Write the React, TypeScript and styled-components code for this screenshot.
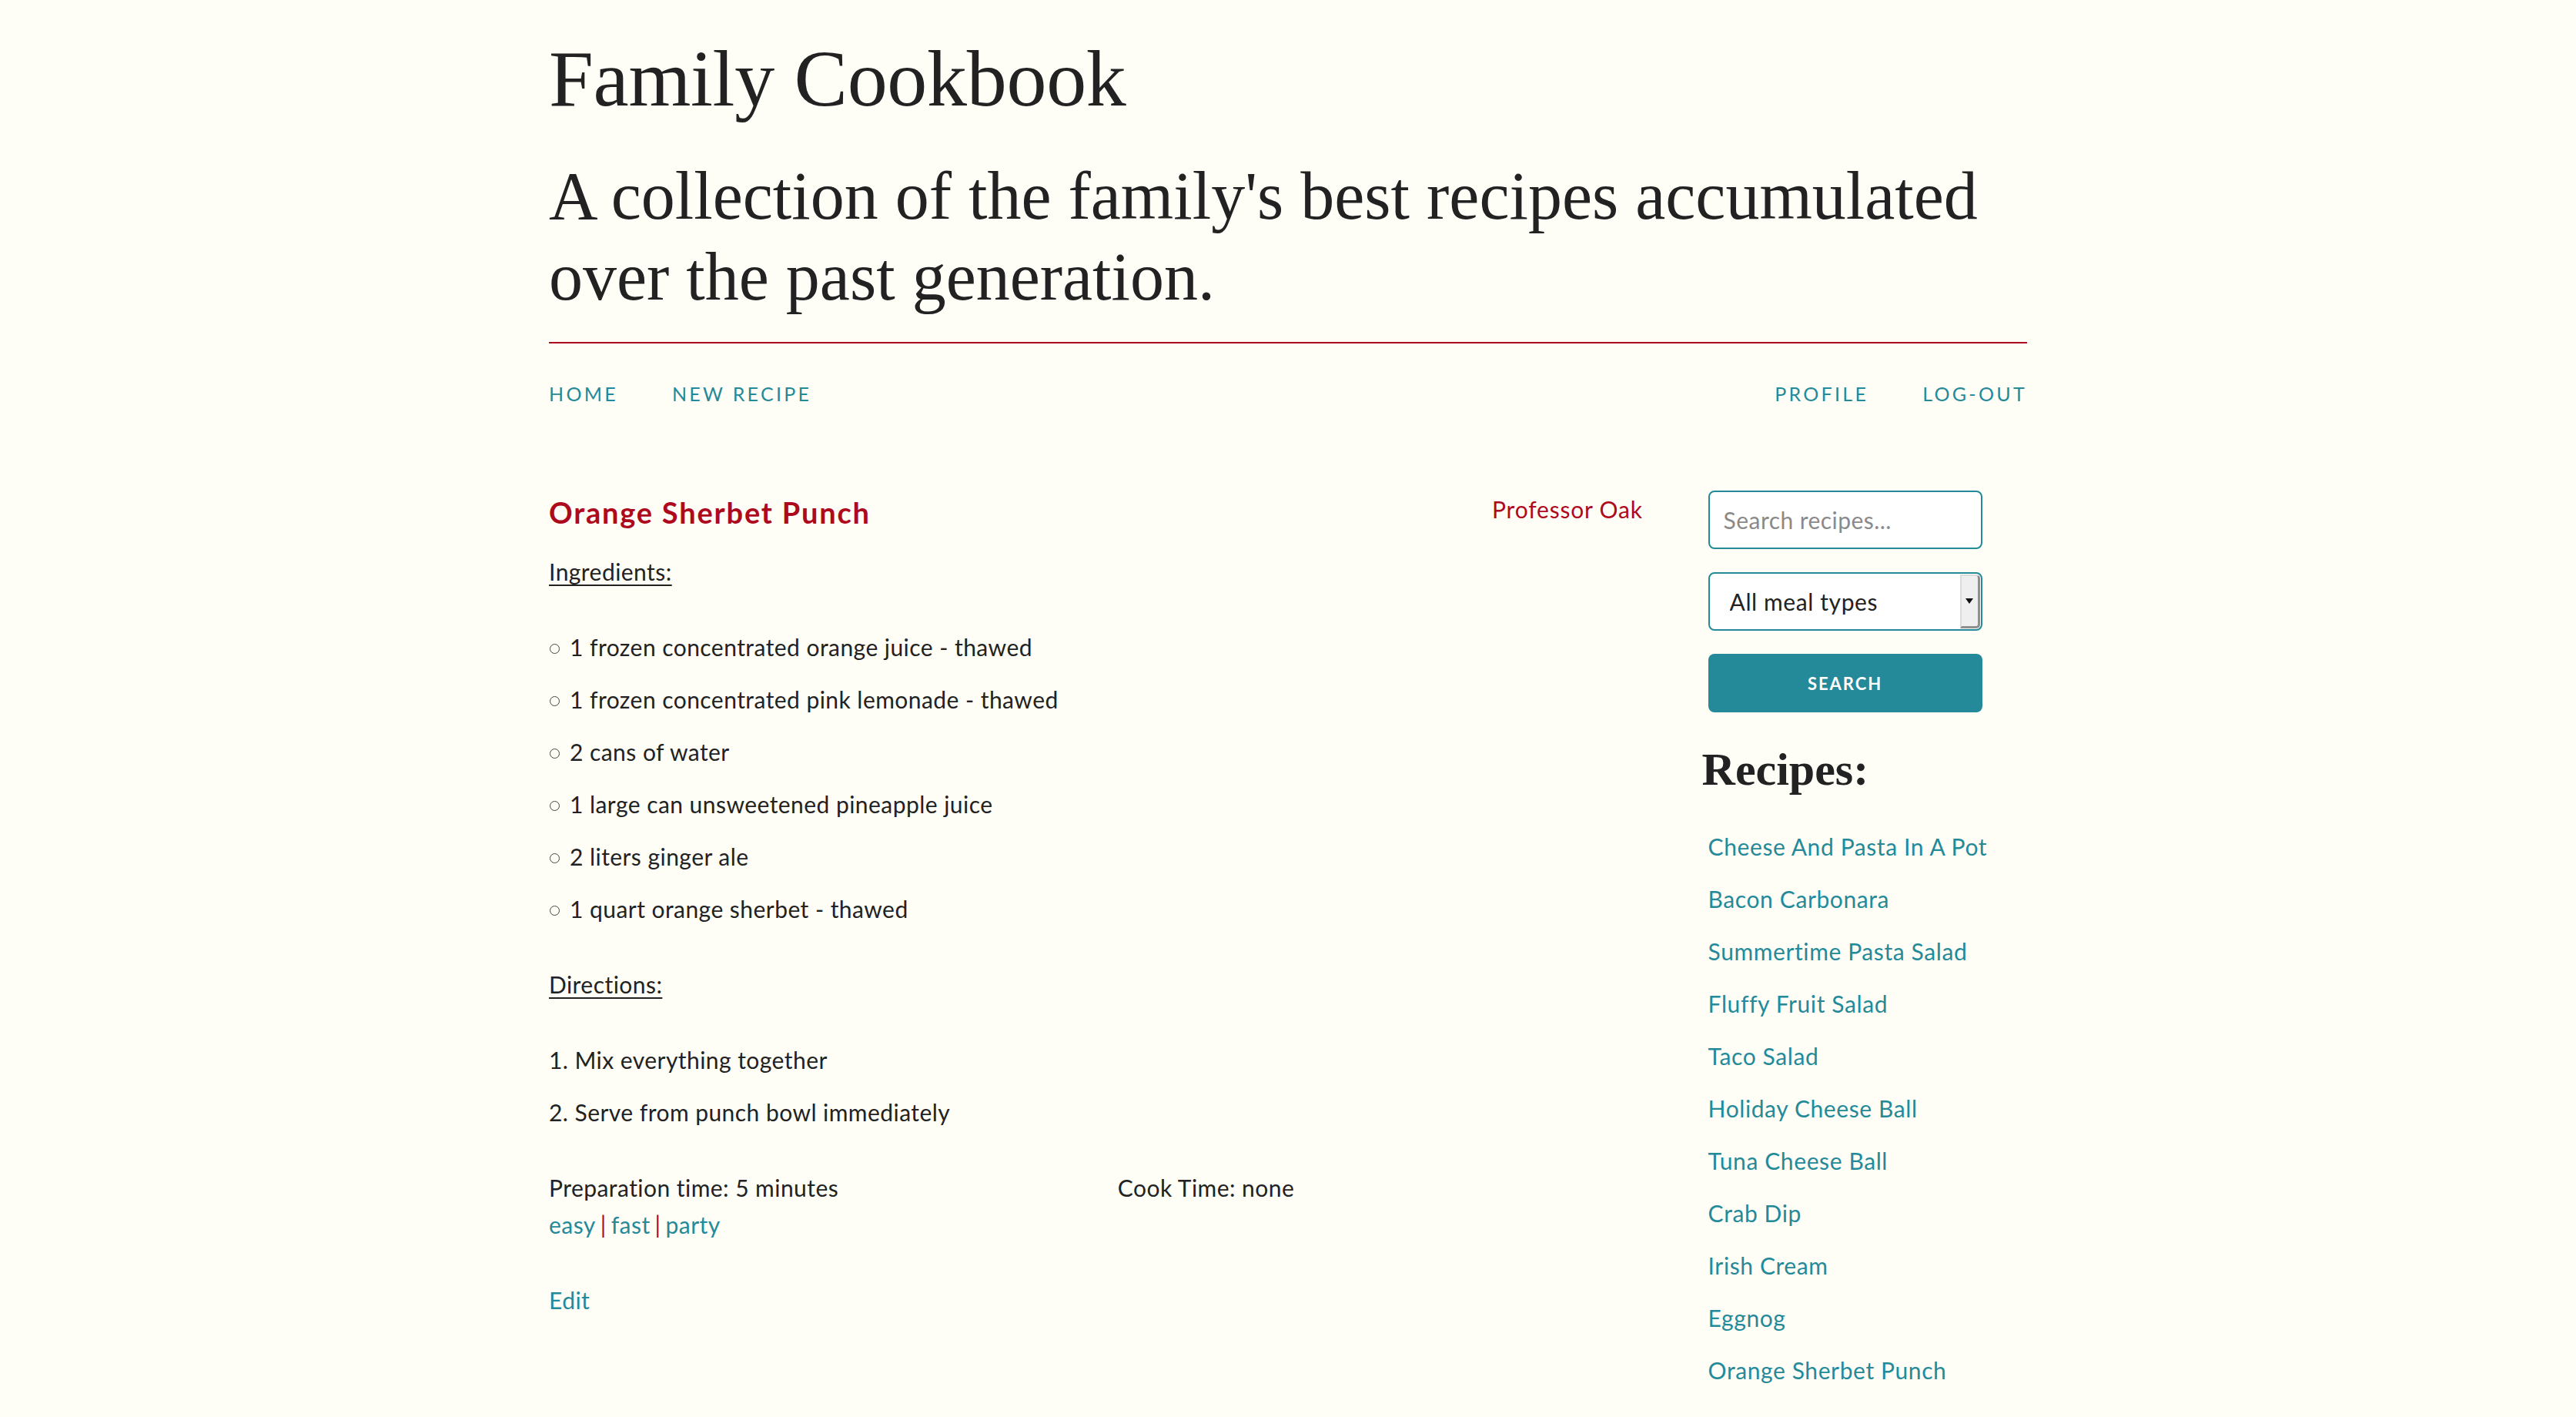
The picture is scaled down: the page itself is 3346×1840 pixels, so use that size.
import React from "react";
import styled, { createGlobalStyle } from "styled-components";

const TEAL = "#248a9a";
const RED = "#ad0a1d";
const INK = "#222222";
const SANS = `Lato, "Open Sans", "Liberation Sans", sans-serif`;
const SERIF = `"Liberation Serif", "DejaVu Serif", serif`;

const GlobalStyle = createGlobalStyle`
  html, body { margin: 0; padding: 0; }
  body {
    background: #fefef7;
    color: ${INK};
    font-family: ${SANS};
    font-size: 30px;
    line-height: 48px;
    letter-spacing: 0.45px;
  }
  * { box-sizing: border-box; }
`;

const Page = styled.div`
  width: 1920px;
  margin: 0 auto;
  padding-top: 42px;
  padding-bottom: 80px;
`;

const Header = styled.header`
  border-bottom: 2px solid ${RED};
  padding-bottom: 32px;
`;

const SiteTitle = styled.h1`
  font-family: ${SERIF};
  font-weight: 400;
  font-size: 104px;
  line-height: 120px;
  letter-spacing: -0.3px;
  margin: 0 0 40px;
  color: ${INK};
`;

const Tagline = styled.h2`
  font-family: ${SERIF};
  font-weight: 400;
  font-size: 88px;
  line-height: 105px;
  letter-spacing: 0;
  margin: 0;
  color: ${INK};
`;

const Nav = styled.nav`
  display: flex;
  justify-content: space-between;
  padding-top: 45px;
  margin-bottom: 106px;
`;

const NavGroup = styled.div`
  display: flex;
  gap: 70px;
`;

const NavLink = styled.a`
  font-size: 25px;
  line-height: 40px;
  letter-spacing: 3.3px;
  text-transform: uppercase;
  color: ${TEAL};
  text-decoration: none;
`;

const Row = styled.div`
  display: flex;
  align-items: flex-start;
`;

const Main = styled.main`
  width: 74%;
`;

const Sidebar = styled.aside`
  width: 22%;
  margin-left: 4%;
`;

const RecipeHeader = styled.div`
  display: flex;
  justify-content: space-between;
  align-items: flex-start;
`;

const RecipeTitle = styled.h3`
  font-family: ${SANS};
  font-weight: 700;
  font-size: 38px;
  line-height: 54px;
  letter-spacing: 1.8px;
  margin: 1px 0 26px;
  color: ${RED};
`;

const Author = styled.span`
  color: ${RED};
  font-size: 30px;
  line-height: 48px;
  letter-spacing: 0.8px;
`;

const SectionLabel = styled.p`
  margin: 0 0 50px;
  text-decoration: underline;
  text-decoration-thickness: 2px;
  text-underline-offset: 5px;
`;

const IngredientList = styled.ul`
  list-style: none;
  margin: 0 0 50px;
  padding: 0;
`;

const Ingredient = styled.li`
  margin-bottom: 20px;
  display: flex;
  align-items: center;
  &::before {
    content: "";
    width: 11px;
    height: 11px;
    border: 1.5px solid #444;
    border-radius: 50%;
    margin: 4px 13px 0 1px;
    flex: none;
  }
`;

const DirectionList = styled.ol`
  list-style: decimal inside;
  margin: 0 0 50px;
  padding: 0;
`;

const Direction = styled.li`
  margin-bottom: 20px;
`;

const TimeRow = styled.div`
  display: grid;
  grid-template-columns: 48% 48%;
  column-gap: 4%;
`;

const Tags = styled.div`
  color: ${TEAL};
`;

const TagSep = styled.span`
  color: ${RED};
  margin: 0 6px;
`;

const TextLink = styled.a`
  color: ${TEAL};
  text-decoration: none;
`;

const EditLine = styled.p`
  margin: 50px 0 0;
`;

const SearchForm = styled.form`
  padding-left: 8px;
  display: flex;
  flex-direction: column;
  align-items: flex-start;
`;

const Field = styled.input`
  width: 356px;
  height: 76px;
  padding: 12px 18px;
  border: 2px solid ${TEAL};
  border-radius: 8px;
  background: #fff;
  font-family: ${SANS};
  font-size: 30px;
  letter-spacing: 0.45px;
  color: ${INK};
  margin: 0 0 30px;
  outline: none;
  &::placeholder { color: #8a8a8a; }
`;

const SelectWrap = styled.div`
  position: relative;
  width: 356px;
  height: 76px;
  margin-bottom: 30px;
`;

const Select = styled.select`
  appearance: none;
  width: 100%;
  height: 100%;
  padding: 0 40px 0 26px;
  border: 2px solid ${TEAL};
  border-radius: 8px;
  background: #fff;
  font-family: ${SANS};
  font-size: 30px;
  letter-spacing: 0.6px;
  color: ${INK};
  outline: none;
`;

const SelectArrow = styled.span`
  position: absolute;
  top: 3px;
  right: 3px;
  bottom: 3px;
  width: 26px;
  background: #efefef;
  border-left: 2px solid #dcdcdc;
  border-right: 3px solid #8f8f8f;
  border-bottom: 3px solid #8f8f8f;
  border-top: 2px solid #dcdcdc;
  border-radius: 0 5px 5px 0;
  pointer-events: none;
  display: flex;
  align-items: center;
  justify-content: center;
  &::after {
    content: "";
    border-left: 5px solid transparent;
    border-right: 5px solid transparent;
    border-top: 7px solid #111;
  }
`;

const SearchButton = styled.button`
  width: 356px;
  height: 76px;
  border: none;
  border-radius: 8px;
  background: ${TEAL};
  color: #fff;
  font-family: ${SANS};
  font-weight: 700;
  font-size: 22px;
  letter-spacing: 2px;
  text-transform: uppercase;
  cursor: pointer;
`;

const RecipesHeading = styled.h4`
  font-family: ${SERIF};
  font-weight: 700;
  font-size: 60px;
  line-height: 81px;
  letter-spacing: 0;
  margin: 34px 0 35px;
  color: ${INK};
`;

const RecipeList = styled.ul`
  list-style: none;
  margin: 0;
  padding: 0 0 0 8px;
`;

const RecipeItem = styled.li`
  margin-bottom: 20px;
  letter-spacing: 0.6px;
`;

const ingredients = [
  "1 frozen concentrated orange juice - thawed",
  "1 frozen concentrated pink lemonade - thawed",
  "2 cans of water",
  "1 large can unsweetened pineapple juice",
  "2 liters ginger ale",
  "1 quart orange sherbet - thawed",
];

const directions = ["Mix everything together", "Serve from punch bowl immediately"];

const recipes = [
  "Cheese And Pasta In A Pot",
  "Bacon Carbonara",
  "Summertime Pasta Salad",
  "Fluffy Fruit Salad",
  "Taco Salad",
  "Holiday Cheese Ball",
  "Tuna Cheese Ball",
  "Crab Dip",
  "Irish Cream",
  "Eggnog",
  "Orange Sherbet Punch",
];

const tags = ["easy", "fast", "party"];

export default function App() {
  return (
    <>
      <GlobalStyle />
      <Page>
        <Header>
          <SiteTitle>Family Cookbook</SiteTitle>
          <Tagline>A collection of the family's best recipes accumulated over the past generation.</Tagline>
        </Header>
        <Nav>
          <NavGroup>
            <NavLink href="#">Home</NavLink>
            <NavLink href="#">New Recipe</NavLink>
          </NavGroup>
          <NavGroup>
            <NavLink href="#">Profile</NavLink>
            <NavLink href="#">Log-out</NavLink>
          </NavGroup>
        </Nav>
        <Row>
          <Main>
            <RecipeHeader>
              <RecipeTitle>Orange Sherbet Punch</RecipeTitle>
              <Author>Professor Oak</Author>
            </RecipeHeader>
            <SectionLabel>Ingredients:</SectionLabel>
            <IngredientList>
              {ingredients.map((i) => (
                <Ingredient key={i}>{i}</Ingredient>
              ))}
            </IngredientList>
            <SectionLabel>Directions:</SectionLabel>
            <DirectionList>
              {directions.map((d) => (
                <Direction key={d}>{d}</Direction>
              ))}
            </DirectionList>
            <TimeRow>
              <span>Preparation time: 5 minutes</span>
              <span>Cook Time: none</span>
            </TimeRow>
            <Tags>
              {tags.map((t, idx) => (
                <React.Fragment key={t}>
                  {idx > 0 && <TagSep>|</TagSep>}
                  <TextLink href="#">{t}</TextLink>
                </React.Fragment>
              ))}
            </Tags>
            <EditLine>
              <TextLink href="#">Edit</TextLink>
            </EditLine>
          </Main>
          <Sidebar>
            <SearchForm onSubmit={(e) => e.preventDefault()}>
              <Field type="text" placeholder="Search recipes..." />
              <SelectWrap>
                <Select defaultValue="all">
                  <option value="all">All meal types</option>
                  <option value="breakfast">Breakfast</option>
                  <option value="lunch">Lunch</option>
                  <option value="dinner">Dinner</option>
                </Select>
                <SelectArrow />
              </SelectWrap>
              <SearchButton type="submit">Search</SearchButton>
            </SearchForm>
            <RecipesHeading>Recipes:</RecipesHeading>
            <RecipeList>
              {recipes.map((r) => (
                <RecipeItem key={r}>
                  <TextLink href="#">{r}</TextLink>
                </RecipeItem>
              ))}
            </RecipeList>
          </Sidebar>
        </Row>
      </Page>
    </>
  );
}
